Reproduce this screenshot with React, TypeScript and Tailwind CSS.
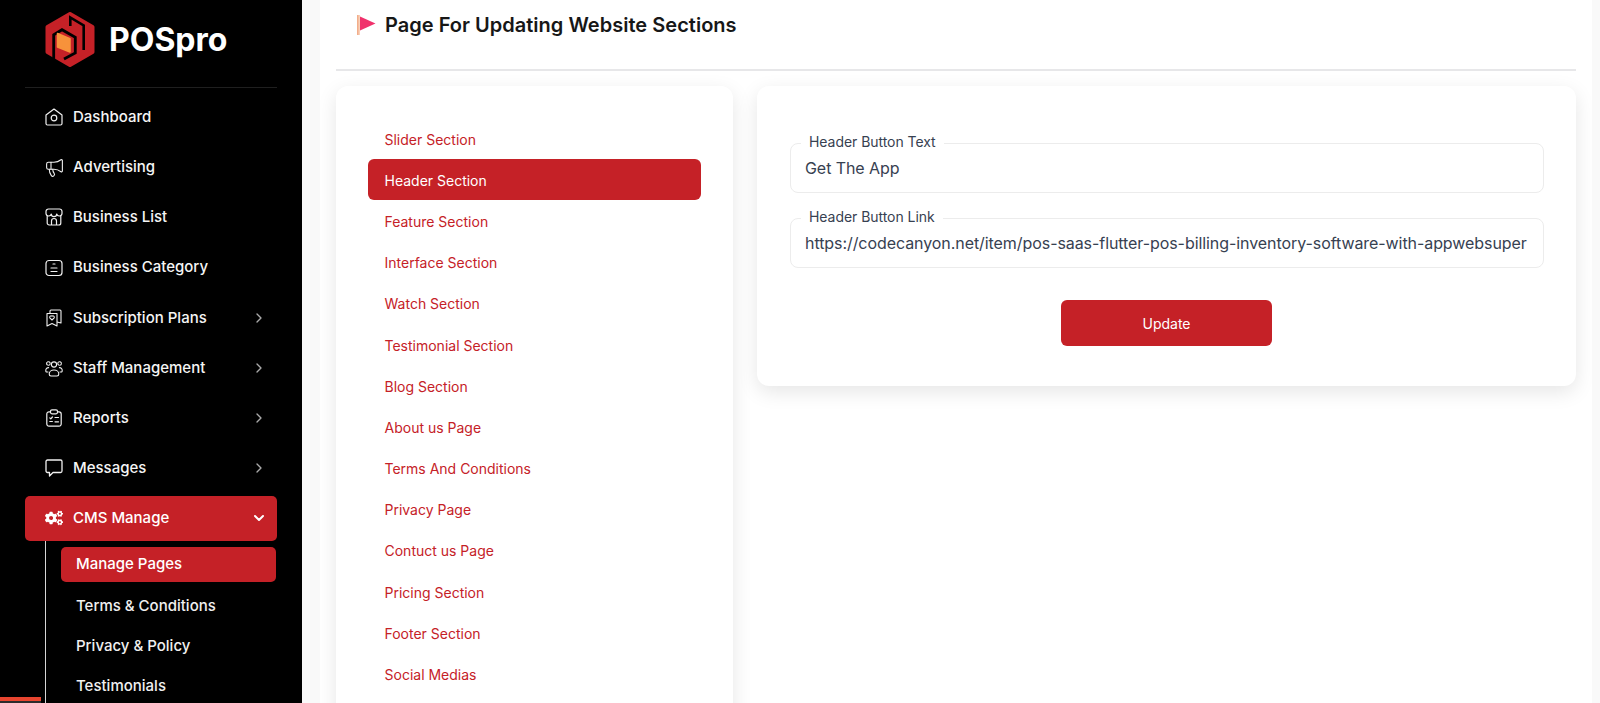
import { ChevronDown, ChevronRight, Megaphone } from "lucide-react";
import { FaCogs } from "react-icons/fa";
import type { ReactNode } from "react";

function Logo() {
  return (
    <svg width="50" height="55" viewBox="0 0 50 55" fill="none">
      <path d="M25 2 L47.5 15 V40 L25 53 L2.5 40 V15 Z" fill="#c52127" strokeLinejoin="round" stroke="#c52127" strokeWidth="4" />
      <path d="M8.7 47 V22.7 L17 17.7 L30.3 25.3 V41 L19 47" stroke="#000" strokeWidth="2.8" />
      <path d="M25.3 14 V5.5 L38.7 13.5 V38" stroke="#000" strokeWidth="2.6" />
      <path d="M12.5 21.5 L25 26.7 V40 L12.5 35 Z" fill="#f7923b" strokeLinejoin="round" stroke="#f7923b" strokeWidth="1.5" />
    </svg>
  );
}

function HomeIcon() {
  return (
    <svg width="18" height="18" viewBox="0 0 18 18" fill="none" stroke="currentColor" strokeWidth="1.2" strokeLinejoin="round">
      <path d="M1 7 L9 1 L17 7 V15.5 A1.5 1.5 0 0 1 15.5 17 H2.5 A1.5 1.5 0 0 1 1 15.5 Z" />
      <circle cx="9" cy="10" r="2.8" />
    </svg>
  );
}

function StoreIcon() {
  return (
    <svg width="18" height="18" viewBox="0 0 18 18" fill="none" stroke="currentColor" strokeWidth="1.2" strokeLinejoin="round">
      <path d="M3.5 1 H14.5 A2.5 2.5 0 0 1 17 3.5 V5.5 A2.7 2.7 0 0 1 11.7 6 A2.7 2.7 0 0 1 6.3 6 A2.7 2.7 0 0 1 1 5.5 V3.5 A2.5 2.5 0 0 1 3.5 1 Z" />
      <path d="M2.2 8 V15 A2 2 0 0 0 4.2 17 H13.8 A2 2 0 0 0 15.8 15 V8" />
      <path d="M6.5 17 V13 A2.5 2.5 0 0 1 11.5 13 V17" />
    </svg>
  );
}

function CategoryIcon() {
  return (
    <svg width="18" height="18" viewBox="0 0 18 18" fill="none" stroke="currentColor" strokeWidth="1.2" strokeLinecap="round">
      <rect x="1" y="1.5" width="16" height="15" rx="3" />
      <path d="M8 5 H10 M6 9 H12 M6 12.5 H12" />
    </svg>
  );
}

function PlanIcon() {
  return (
    <svg width="18" height="18" viewBox="0 0 18 18" fill="none" stroke="currentColor" strokeWidth="1.1" strokeLinejoin="round">
      <path d="M2 4.5 H12 V17 L7 14.5 L2 17 Z" />
      <path d="M5 4.5 V2 A1 1 0 0 1 6 1 H15 A1 1 0 0 1 16 2 V14 L12 13" />
      <path d="M7 11 L4.8 8.8 A1.4 1.4 0 0 1 7 7.2 A1.4 1.4 0 0 1 9.2 8.8 Z" />
    </svg>
  );
}

function StaffIcon() {
  return (
    <svg width="18" height="18" viewBox="0 0 18 18" fill="none" stroke="currentColor" strokeWidth="1.1" strokeLinejoin="round" strokeLinecap="round">
      <circle cx="9" cy="5.5" r="2.6" />
      <path d="M4.2 15 A4.8 4 0 0 1 13.8 15 Q13.8 17 12 17 H6 Q4.2 17 4.2 15 Z" />
      <circle cx="3.4" cy="4.5" r="1.8" strokeDasharray="2.5 1" />
      <circle cx="14.6" cy="4.5" r="1.8" strokeDasharray="2.5 1" />
      <path d="M3 13 H1.8 Q0.7 13 0.8 11.6 A2.8 2.8 0 0 1 3.6 8.6 M15 13 H16.2 Q17.3 13 17.2 11.6 A2.8 2.8 0 0 0 14.4 8.6" />
    </svg>
  );
}

function ReportIcon() {
  return (
    <svg width="18" height="18" viewBox="0 0 18 18" fill="none" stroke="currentColor" strokeWidth="1.2" strokeLinecap="round" strokeLinejoin="round">
      <path d="M5.5 2.8 H4 A2.2 2.2 0 0 0 1.8 5 V15 A2.2 2.2 0 0 0 4 17.2 H14 A2.2 2.2 0 0 0 16.2 15 V5 A2.2 2.2 0 0 0 14 2.8 H12.5" />
      <rect x="5.5" y="0.8" width="7" height="4" rx="1.5" />
      <path d="M10 8.5 H13.5 M10 12.8 H13.5 M4.8 8.8 L5.8 9.8 L7.4 8 M4.8 12.5 H7.4" />
    </svg>
  );
}

function MessageIcon() {
  return (
    <svg width="18" height="18" viewBox="0 0 18 18" fill="none" stroke="currentColor" strokeWidth="1.3" strokeLinejoin="round">
      <path d="M2.5 1 H15.5 A1.5 1.5 0 0 1 17 2.5 V12 A1.5 1.5 0 0 1 15.5 13.5 H8 L4.5 17 V13.5 H2.5 A1.5 1.5 0 0 1 1 12 V2.5 A1.5 1.5 0 0 1 2.5 1 Z" />
    </svg>
  );
}

function Flag() {
  return (
    <svg width="19" height="21" viewBox="0 0 19 21">
      <defs>
        <linearGradient id="pole" x1="0" x2="1" y1="0" y2="0">
          <stop offset="0" stopColor="#f0a57f" />
          <stop offset="1" stopColor="#fbd9c4" />
        </linearGradient>
      </defs>
      <rect x="0" y="0" width="3" height="20" fill="url(#pole)" />
      <path d="M3 1.5 L18.5 8.5 L3 15.5 Z" fill="#f0326c" />
    </svg>
  );
}

type NavRow = { label: string; icon: ReactNode; arrow?: boolean };

const navItems: NavRow[] = [
  { label: "Dashboard", icon: <HomeIcon /> },
  { label: "Advertising", icon: <Megaphone size={21} strokeWidth={1.25} className="shrink-0" /> },
  { label: "Business List", icon: <StoreIcon /> },
  { label: "Business Category", icon: <CategoryIcon /> },
  { label: "Subscription Plans", icon: <PlanIcon />, arrow: true },
  { label: "Staff Management", icon: <StaffIcon />, arrow: true },
  { label: "Reports", icon: <ReportIcon />, arrow: true },
  { label: "Messages", icon: <MessageIcon />, arrow: true },
];

const subItems = ["Terms & Conditions", "Privacy & Policy", "Testimonials"];

const sections = [
  "Slider Section",
  "Header Section",
  "Feature Section",
  "Interface Section",
  "Watch Section",
  "Testimonial Section",
  "Blog Section",
  "About us Page",
  "Terms And Conditions",
  "Privacy Page",
  "Contuct us Page",
  "Pricing Section",
  "Footer Section",
  "Social Medias",
];

function Sidebar() {
  return (
    <aside className="relative w-[302px] shrink-0 h-full bg-black text-white overflow-hidden font-['Inter',sans-serif] text-[15px] font-medium">
      <div className="mx-[25px] h-[88px] border-b border-[#1f1f1f] flex items-start pt-[12px] pl-[20px] gap-[14px]">
        <Logo />
        <span className="text-[32px] leading-[56px] font-bold">POSpro</span>
      </div>
      <nav className="mt-[4px]">
        {navItems.map((it) => (
          <div key={it.label} className="h-[50.2px] mx-[25px] pl-[20px] pr-[10px] flex items-center">
            <span className="w-[18px] flex justify-center text-[#f0f0f0]">{it.icon}</span>
            <span className="ml-[10px] flex-1 text-[#f5f5f5]">{it.label}</span>
            {it.arrow && <ChevronRight size={16} className="text-[#aaaaaa]" />}
          </div>
        ))}
        <div className="h-[45px] mt-[2px] mx-[25px] pl-[20px] pr-[10px] flex items-center bg-[#c52127] rounded-[5px]">
          <FaCogs size={18} />
          <span className="ml-[10px] flex-1 pt-[1px]">CMS Manage</span>
          <ChevronDown size={16} strokeWidth={3} />
        </div>
        <div className="ml-[45px] border-l border-[#d5d5d5] pt-[6px] pl-[15px] pr-[26px]">
          <div className="h-[35px] mb-[5px] rounded-[5px] bg-[#c52127] pl-[15px] pt-[1px] flex items-center">Manage Pages</div>
          {subItems.map((s) => (
            <div key={s} className="h-[40px] pl-[15px] flex items-center text-[#f0f0f0]">
              {s}
            </div>
          ))}
        </div>
      </nav>
      <div className="absolute left-0 bottom-0 w-[41px] h-[6px] border-t-[4px] border-[#e8452f] bg-[#2c2c2c]" />
    </aside>
  );
}

function Field({ label, value }: { label: string; value: string }) {
  return (
    <div className="relative">
      <span className="absolute left-[11px] top-[-11px] bg-white px-[8px] text-[14px] leading-[20px] text-[#374151] tracking-[-0.05px]">
        {label}
      </span>
      <input
        readOnly
        value={value}
        className="w-full h-[50px] border border-[#ececec] rounded-[8px] bg-white pl-[14px] pr-[10px] text-[16px] tracking-[-0.07px] text-[#374151] outline-none"
      />
    </div>
  );
}

export default function App() {
  return (
    <div className="flex h-[703px] w-full overflow-hidden bg-[#f9f9f9]">
      <Sidebar />
      <main className="ml-[18px] w-[1272px] h-full bg-white px-[16px] overflow-hidden font-['Inter',sans-serif]">
        <div className="h-[71px] border-b-2 border-[#e7e7e9] flex items-start pt-[15px] pl-[21px] gap-[9px]">
          <Flag />
          <h1 className="text-[20px] leading-[20px] font-semibold tracking-[0.02px] text-[#171717]">
            Page For Updating Website Sections
          </h1>
        </div>
        <div className="flex gap-[24px] items-start mt-[15px]">
          <div className="w-[397px] h-[640px] shrink-0 bg-white rounded-[12px] shadow-[0_6px_20px_rgba(0,0,0,0.10)] pt-[32px] px-[32px]">
            {sections.map((s) => (
              <div
                key={s}
                className={
                  s === "Header Section"
                    ? "h-[41.2px] pl-[16.5px] pt-[1px] flex items-center rounded-[6px] bg-[#c52127] text-white text-[14px]"
                    : "h-[41.2px] pl-[16.5px] pt-[1px] flex items-center text-[#c52127] text-[14px]"
                }
              >
                {s}
              </div>
            ))}
          </div>
          <div className="flex-1 h-[300px] bg-white rounded-[12px] shadow-[0_6px_20px_rgba(0,0,0,0.10)] pt-[57px] pl-[33px] pr-[32px]">
            <div className="flex flex-col gap-[25px]">
              <Field label="Header Button Text" value="Get The App" />
              <Field
                label="Header Button Link"
                value="https://codecanyon.net/item/pos-saas-flutter-pos-billing-inventory-software-with-appwebsuper"
              />
            </div>
            <div className="flex justify-center mt-[32px] pr-[1px]">
              <button className="w-[211px] h-[46px] rounded-[6px] bg-[#c52127] text-white text-[14px]">Update</button>
            </div>
          </div>
        </div>
      </main>
    </div>
  );
}
